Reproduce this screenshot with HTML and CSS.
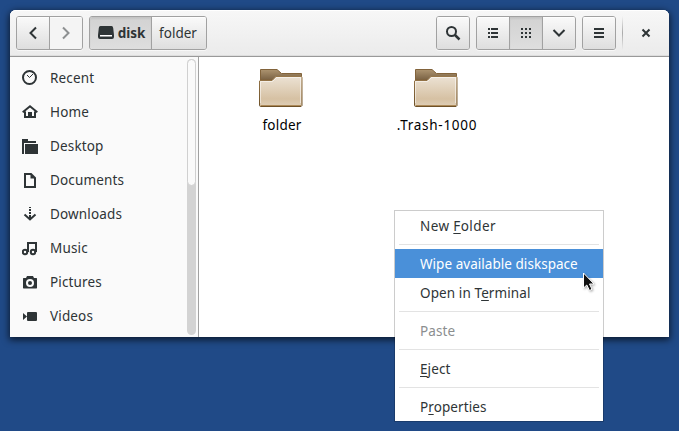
FILE: index.html
```html
<!DOCTYPE html>
<html lang="en">
<head>
<meta charset="utf-8">
<title>Files</title>
<link rel="stylesheet" href="styles.css">
</head>
<body>
<main class="window">
  <header class="headerbar">
    <div class="group nav">
      <button class="btn"><svg width="16" height="16" viewBox="0 0 16 16"><path class="line" d="M11 2.500 5.500 8l5.500 5.500"/></svg></button>
      <button class="btn off"><svg width="16" height="16" viewBox="0 0 16 16"><path class="line" d="M5 2.500 10.500 8 5 13.500"/></svg></button>
    </div>
    <div class="group path">
      <button class="btn on disk"><svg width="16" height="16" viewBox="0 0 16 16"><path d="M2.500 1h11q1.500 0 1.700 2l.8 7v2q0 2-2 2H2q-2 0-2-2v-2l.8-7Q1 1 2.500 1z"/><path fill="#fff" d="M2 10h12v1.500H2z"/></svg><b>disk</b></button>
      <button class="btn crumb">folder</button>
    </div>
    <div class="group search">
      <button class="btn"><svg width="16" height="16" viewBox="0 0 16 16"><circle class="line" cx="6.500" cy="6.500" r="4.500"/><path class="line wide" d="m10 10 4.500 4.500"/></svg></button>
    </div>
    <div class="group views">
      <button class="btn"><svg width="16" height="16" viewBox="0 0 16 16"><path d="M3 3h2v2H3zM3 7h2v2H3zM3 11h2v2H3zM6 3h7v2H6zM6 7h7v2H6zM6 11h7v2H6z"/></svg></button>
      <button class="btn on"><svg width="16" height="16" viewBox="0 0 16 16"><path d="M3 3h2v2H3zM7 3h2v2H7zM11 3h2v2h-2zM3 7h2v2H3zM7 7h2v2H7zM11 7h2v2h-2zM3 11h2v2H3zM7 11h2v2H7zM11 11h2v2h-2z"/></svg></button>
      <button class="btn"><svg width="16" height="16" viewBox="0 0 16 16"><path class="line" d="m2.500 5 5.500 5.500L13.500 5"/></svg></button>
    </div>
    <div class="group menu-button">
      <button class="btn"><svg width="16" height="16" viewBox="0 0 16 16"><path d="M3 3h10v2H3zM3 7h10v2H3zM3 11h10v2H3z"/></svg></button>
    </div>
    <i class="divider"></i>
    <button class="close"><svg width="16" height="16" viewBox="0 0 16 16"><path class="line" d="m4.500 4.500 7 7m0-7-7 7"/></svg></button>
  </header>
  <div class="content">
    <nav class="sidebar">
      <ul class="places">
        <li><svg width="16" height="16" viewBox="0 0 16 16"><circle class="line" cx="7.500" cy="7.500" r="6.500"/><path class="line thin" d="m5 5 2.500 2.500L11 4"/></svg><span>Recent</span></li>
        <li><svg width="16" height="16" viewBox="0 0 16 16"><path class="line" d="M.7 8.200 8 2.300l7.300 5.900M3 7.500V13h10V7.500"/><path d="M6 8h4v5H6z"/><path fill="#fafafa" d="M4 8h2v4H4zM10 8h2v4h-2z"/></svg><span>Home</span></li>
        <li><svg width="16" height="16" viewBox="0 0 16 16"><path d="M0 1h6v2h8v2H2v11H0z"/><path d="M3 6h13v10H3z"/></svg><span>Desktop</span></li>
        <li><svg width="16" height="16" viewBox="0 0 16 16"><path class="line" d="M3 2h6l4 4v9H3z"/><path d="M8.500 2v4.500H13z"/></svg><span>Documents</span></li>
        <li><svg width="16" height="16" viewBox="0 0 16 16"><path d="M7 1h2v1H7zM7 3h2v2H7zM7 6h2v2H7zM7 9h2v4H7z"/><path class="line" d="m2.500 8.500 5.500 5 5.500-5"/></svg><span>Downloads</span></li>
        <li><svg width="16" height="16" viewBox="0 0 16 16"><circle class="line" cx="3" cy="12" r="2.200"/><circle class="line" cx="11" cy="12" r="2.200"/><path class="line" d="M6 12V3h8v9"/></svg><span>Music</span></li>
        <li><svg width="16" height="16" viewBox="0 0 16 16"><path fill-rule="evenodd" d="M1.500 4H4l1-2h6l1 2h2.500l.5.500V14l-.500.500h-13L1 14V4.500zM8 5a4 4 0 1 0 0 8 4 4 0 0 0 0-8z"/><circle cx="8" cy="9" r="2"/></svg><span>Pictures</span></li>
        <li><svg width="16" height="16" viewBox="0 0 16 16"><path d="M6 4h8q1 0 1 1v7q0 1-1 1H6q-1 0-1-1V5q0-1 1-1zM1 5l4 3.500L1 12z"/></svg><span>Videos</span></li>
      </ul>
      <div class="scrollbar"><i class="slider"></i></div>
    </nav>
    <section class="files">
      <figure>
        <svg class="folder" width="48" height="44" viewBox="0 0 48 44"><use href="#folder-art"/></svg>
        <figcaption>folder</figcaption>
      </figure>
      <figure>
        <svg class="folder" width="48" height="44" viewBox="0 0 48 44">
          <defs>
            <linearGradient id="front" x2="0" y2="1"><stop stop-color="#ece2d4"/><stop offset=".75" stop-color="#d6c1a3"/><stop offset="1" stop-color="#dfcfb8"/></linearGradient>
            <linearGradient id="back" x2="0" y2="1"><stop stop-color="#ad9470"/><stop offset="1" stop-color="#796143"/></linearGradient>
            <linearGradient id="edge" x2="0" y2="1"><stop stop-color="#97774a"/><stop offset="1" stop-color="#6e5128"/></linearGradient>
            <g id="folder-art">
              <path fill="#0002" d="M2 39h43v2H2z"/>
              <path fill="url(#back)" stroke="#82633b" d="M3.500 14V3.500h16.500l4.500 4h20V14z"/>
              <path fill="url(#front)" stroke="url(#edge)" d="M3 14.500h12l4-4h25.500l.5 1v28l-1 1H3.500l-1-1V15z"/>
              <path fill="none" stroke="#fff8" d="M3.500 37V15.500h12l4-4h24V37"/>
              <path fill="none" stroke="#ad8a59" d="M3.500 39.500h40.500"/>
            </g>
          </defs>
          <use href="#folder-art"/>
        </svg>
        <figcaption class="spaced">.Trash-1000</figcaption>
      </figure>
    </section>
  </div>
</main>
<div class="menu">
  <div class="item">New <u>F</u>older</div>
  <hr>
  <div class="item selected">Wipe available diskspace</div>
  <div class="item">Open in T<u>e</u>rminal</div>
  <hr>
  <div class="item disabled">Paste</div>
  <hr>
  <div class="item"><u>E</u>ject</div>
  <hr>
  <div class="item">P<u>r</u>operties</div>
</div>
<svg class="cursor" width="15" height="22" viewBox="0 0 15 22"><path fill="#111" stroke="#fff" d="M1.500 1v15l3.300-3 2.700 5.500 2.500-1.200-2.500-5.300h4.500z"/></svg>
</body>
</html>
```
FILE: styles.css
```css
* { box-sizing: border-box; }
body {
  margin: 0;
  width: 679px;
  height: 431px;
  padding: 10px;
  overflow: hidden;
  background: #204a87;
  color: #2e3436;
  font: 13.500px/20px "Noto Sans", "Open Sans", sans-serif;
}
svg { display: block; flex: none; fill: #2e3436; }
.line { fill: none; stroke: #2e3436; stroke-width: 2; }
.wide { stroke-width: 2.500; }
.thin { stroke-width: 1; }

.window {
  width: 659px;
  height: 327px;
  border-radius: 6px 6px 0 0;
  background: #fff;
  box-shadow: 0 2px 7px 1px rgba(0, 0, 0, .65);
}
.headerbar {
  display: flex;
  height: 47px;
  padding: 6px 6px 0;
  border-bottom: 1px solid #999;
  border-radius: 6px 6px 0 0;
  background: linear-gradient(#f7f7f7, #ebebeb);
  box-shadow: inset 0 1px #fff, inset 0 -1px #ddd;
}
.group {
  display: flex;
  height: 34px;
  border: 1px solid #a1a1a1;
  border-radius: 3px;
  overflow: hidden;
  box-shadow: 0 1px #fff9;
}
button { font: inherit; color: inherit; border: 0; padding: 0; }
.btn {
  display: flex;
  flex: 1;
  align-items: center;
  justify-content: center;
  background: linear-gradient(#fafafa, #dedede);
  box-shadow: inset 0 1px #fffb;
}
.btn + .btn { border-left: 1px solid #a1a1a1; }
.btn.on { background: linear-gradient(#d2d2d2, #dedede); box-shadow: inset 0 2px 2px #0001; }
.btn.off { background: #f4f4f4; }
.off .line { stroke: #8d9091; }
.nav { width: 67px; margin-right: 6px; }
.path { width: 118px; margin-right: auto; }
.disk { flex: 0 0 61px; gap: 4px; padding-left: 2px; }
.crumb { padding-right: 2px; }
.search { width: 34px; margin-right: 6px; }
.views { width: 100px; margin-right: 6px; }
.menu-button { width: 34px; margin-right: 6px; }
.divider { width: 1px; height: 34px; background: linear-gradient(#ccc0, #aaa 50%, #ccc0); }
.close { width: 40px; height: 34px; padding-left: 9px; background: none; }
.close svg { margin-left: 6px; }

.content { display: flex; height: 280px; }
.sidebar {
  display: flex;
  width: 189px;
  border-right: 1px solid #a1a1a1;
  background: #fafafa;
}
.places { flex: 1; margin: 0; padding: 4px 0 0 12px; list-style: none; }
.places li { display: flex; align-items: center; gap: 12px; height: 34px; letter-spacing: .15px; }
.scrollbar { width: 9px; height: 276px; margin: 2px 2px 0 0; border-radius: 5px; background: #d3d3d3; }
.slider { display: block; height: 127px; border: 1px solid #d0d0d0; border-radius: 5px; background: #fafafa; }

.files { display: flex; padding: 9px 0 0 5px; color: #000; }
.files figure { display: flex; flex-direction: column; align-items: center; width: 155px; margin: 0; }
.folder { margin-right: 2px; }
.files figcaption { margin-top: 5px; padding-left: 1px; letter-spacing: .2px; }
.files .spaced { letter-spacing: .72px; }

.menu {
  position: absolute;
  left: 395px;
  top: 211px;
  width: 208px;
  height: 210px;
  background: #fff;
  box-shadow: 0 0 0 1px rgba(0, 0, 0, .2);
}
.item { height: 29px; padding-left: 25px; line-height: 31px; letter-spacing: .1px; white-space: nowrap; }
.item:first-child { letter-spacing: .4px; }
.item.selected { background: #4a90d9; color: #fff; letter-spacing: .04px; }
.item.disabled { color: #8b8e8f; }
.item u { text-decoration-thickness: 1px; text-underline-offset: 2px; text-decoration-skip-ink: none; }
.menu hr { height: 1px; margin: 4px; border: 0; background: #e3e3e3; }
.cursor { position: absolute; left: 582px; top: 272px; filter: drop-shadow(1px 1px 1px #0005); }
```
